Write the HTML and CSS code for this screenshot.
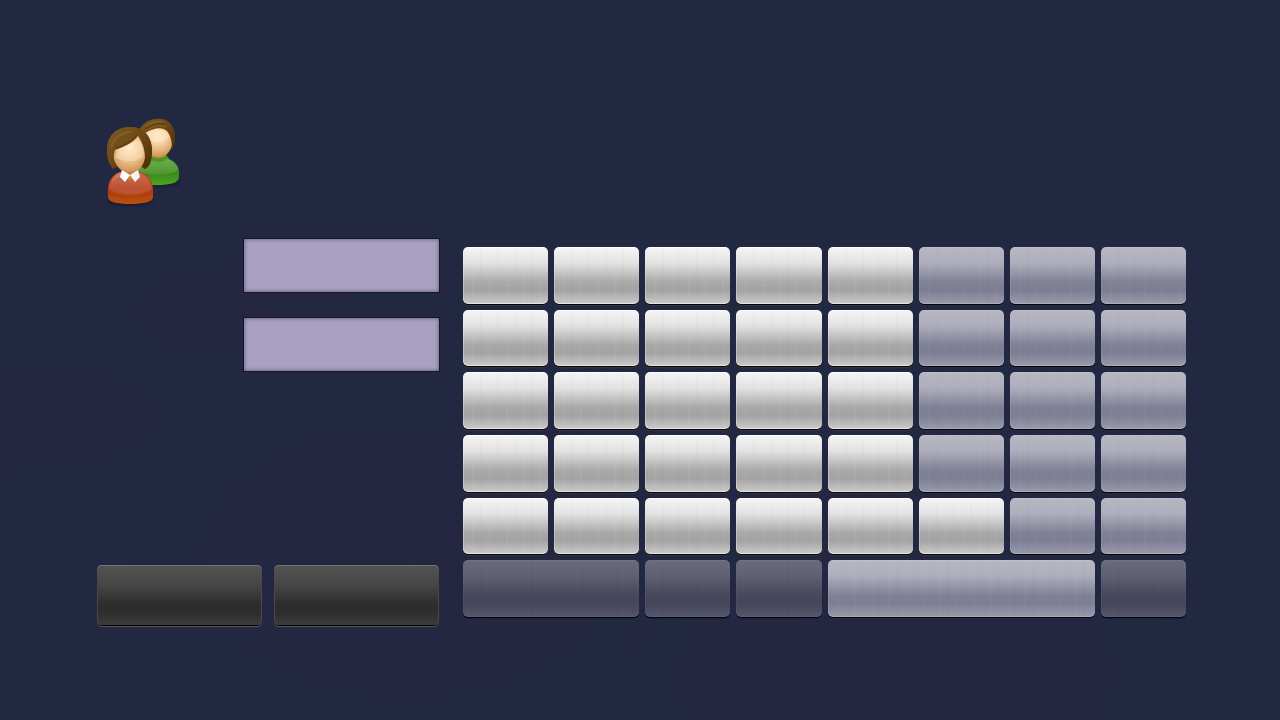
FILE: index.html
```html
<!DOCTYPE html>
<html lang="en">
<head>
<meta charset="utf-8">
<meta name="viewport" content="width=device-width, initial-scale=1">
<title>Keyboard</title>
<link rel="stylesheet" href="styles.css">
</head>
<body>
<main class="screen">
  <header class="header">
    <svg class="users" viewBox="0 0 78 92" aria-hidden="true">
      <defs>
        <radialGradient id="skin" cx=".5" cy=".3" r=".75"><stop offset="0" stop-color="#ffebc8"/><stop offset=".4" stop-color="#f2cd9c"/><stop offset=".8" stop-color="#d79f63"/><stop offset="1" stop-color="#b97f43"/></radialGradient>
        <linearGradient id="hair" x1="0" y1="0" x2="1" y2="1"><stop offset="0" stop-color="#7d5a26"/><stop offset=".5" stop-color="#6d4813"/><stop offset="1" stop-color="#4b2d05"/></linearGradient>
        <linearGradient id="red" x1="0" y1="0" x2="0" y2="1"><stop offset="0" stop-color="#c24a2a"/><stop offset=".55" stop-color="#b03a17"/><stop offset="1" stop-color="#b85208"/></linearGradient>
        <linearGradient id="green" x1="0" y1="0" x2="0" y2="1"><stop offset="0" stop-color="#4f9a25"/><stop offset=".6" stop-color="#3c8a1c"/><stop offset="1" stop-color="#4da61c"/></linearGradient>
        <linearGradient id="shine" x1="0" y1="0" x2="0" y2="1"><stop offset="0" stop-color="#fff" stop-opacity=".2"/><stop offset="1" stop-color="#fff" stop-opacity=".1"/></linearGradient>
        <filter id="soft" x="-20%" y="-50%" width="140%" height="200%"><feGaussianBlur stdDeviation="1.5"/></filter>
      </defs>
      <ellipse cx="54" cy="67" rx="22" ry="4" fill="#0b0e19" opacity=".45" filter="url(#soft)"/>
      <path d="M30 54C32 46 42 42 54 42C67 42 75 49 75 57V62C75 68 66 70 53 70C39 70 30 68 28 62Z" fill="url(#green)"/>
      <path d="M33 55C34 47 43 42 54 42C66 42 73 48 74 55C67 61 40 61 33 55Z" fill="url(#shine)"/>
      <path d="M43 43Q54 51 65 43L60 38H46Z" fill="#4f981f"/>
      <path d="M36 18C39 8 46 4 56 4C65 4 71 12 71 22C71 27 70 31 67 34L62 20L46 14Z" fill="url(#hair)"/>
      <path d="M38 20C40 12 47 12 53 13C60 12 67 16 69 24C69 34 62 43 55 43C46 43 38 34 38 20Z" fill="url(#skin)"/>
      <path d="M42 17Q54 10 66 20Q64 26 55 27Q45 27 40 23Z" fill="#ffebca" opacity=".5"/>
      <path d="M34 18C38 7 48 3 57 4C66 5 71 13 71 23C71 28 70 32 68 34C68 27 67 21 63 16C57 11 49 14 43 17L37 21Z" fill="url(#hair)"/>
      <path d="M42 11Q51 5 60 7M45 14Q54 8 63 12" fill="none" stroke="#98713b" stroke-width="1" opacity=".65"/>
      <path d="M41 14Q51 8 61 9" fill="none" stroke="#4c2e08" stroke-width="1" opacity=".6"/>
      <ellipse cx="26" cy="86" rx="23" ry="4" fill="#090c16" opacity=".5" filter="url(#soft)"/>
      <path d="M4 74C4 62 14 55 26 55C39 55 49 62 49 75V82C49 87 39 89 26 89C13 89 4 87 4 82Z" fill="url(#red)"/>
      <path d="M5 74C6 63 15 56 26 56C38 56 47 63 48 74C40 81 13 81 5 74Z" fill="url(#shine)"/>
      <path d="M7 68Q9 59 17 57V61Q11 63 7 68Z" fill="#fff" opacity=".15"/>
      <path d="M5 77Q9 82 26 82Q44 82 48 77" fill="none" stroke="#872705" opacity=".35"/>
      <path d="M3 35C3 20 13 12 26 12C39 12 48 21 48 35C48 46 46 52 41 54L36 51H14L9 54C5 49 3 44 3 35Z" fill="url(#hair)"/>
      <path d="M9 36C12 27 29 19 36 21C41 25 43 34 41 43C39 52 34 58 26 58C17 58 9 50 9 36Z" fill="url(#skin)"/>
      <path d="M14 35Q24 29 34 25Q41 33 39 42Q31 47 25 46Q16 46 11 42Z" fill="#ffecce" opacity=".4"/>
      <path d="M34 21C39 28 43 38 40 54C46 52 48 43 48 34C47 22 40 12 27 12C11 12 3 22 3 35C3 44 5 50 9 53C9 48 9 41 11 35C20 32 29 28 34 21Z" fill="url(#hair)"/>
      <path d="M7 33Q12 17 28 17" fill="none" stroke="#a07a45" stroke-width="2" opacity=".35"/>
      <path d="M11 33Q24 30 33 20" fill="none" stroke="#452707" stroke-width="1" opacity=".5"/>
      <path d="M20 57L26 60L33 57V61L26 65L19 61Z" fill="#c98628"/>
      <path d="M18 55L26 60L21 67L16 62Z" fill="#fff"/>
      <path d="M34 55L26 60L31 67L36 62Z" fill="#f4f4f3"/>
    </svg>
  </header>
  <div class="content">
    <form class="side">
      <div class="fields">
        <input class="field" type="text" aria-label="First field">
        <input class="field" type="text" aria-label="Second field">
      </div>
      <div class="actions">
        <button class="action" type="button" aria-label="Left action"></button>
        <button class="action" type="button" aria-label="Right action"></button>
      </div>
    </form>
    <section class="keys" aria-label="Keyboard">
      <button class="key" aria-label="Key 1"></button>
      <button class="key" aria-label="Key 2"></button>
      <button class="key" aria-label="Key 3"></button>
      <button class="key" aria-label="Key 4"></button>
      <button class="key" aria-label="Key 5"></button>
      <button class="key key-muted" aria-label="Key 6"></button>
      <button class="key key-muted" aria-label="Key 7"></button>
      <button class="key key-muted" aria-label="Key 8"></button>
      <button class="key" aria-label="Key 9"></button>
      <button class="key" aria-label="Key 10"></button>
      <button class="key" aria-label="Key 11"></button>
      <button class="key" aria-label="Key 12"></button>
      <button class="key" aria-label="Key 13"></button>
      <button class="key key-muted" aria-label="Key 14"></button>
      <button class="key key-muted" aria-label="Key 15"></button>
      <button class="key key-muted" aria-label="Key 16"></button>
      <button class="key" aria-label="Key 17"></button>
      <button class="key" aria-label="Key 18"></button>
      <button class="key" aria-label="Key 19"></button>
      <button class="key" aria-label="Key 20"></button>
      <button class="key" aria-label="Key 21"></button>
      <button class="key key-muted" aria-label="Key 22"></button>
      <button class="key key-muted" aria-label="Key 23"></button>
      <button class="key key-muted" aria-label="Key 24"></button>
      <button class="key" aria-label="Key 25"></button>
      <button class="key" aria-label="Key 26"></button>
      <button class="key" aria-label="Key 27"></button>
      <button class="key" aria-label="Key 28"></button>
      <button class="key" aria-label="Key 29"></button>
      <button class="key key-muted" aria-label="Key 30"></button>
      <button class="key key-muted" aria-label="Key 31"></button>
      <button class="key key-muted" aria-label="Key 32"></button>
      <button class="key" aria-label="Key 33"></button>
      <button class="key" aria-label="Key 34"></button>
      <button class="key" aria-label="Key 35"></button>
      <button class="key" aria-label="Key 36"></button>
      <button class="key" aria-label="Key 37"></button>
      <button class="key" aria-label="Key 38"></button>
      <button class="key key-muted" aria-label="Key 39"></button>
      <button class="key key-muted" aria-label="Key 40"></button>
      <button class="key key-dark key-double" aria-label="Key 41"></button>
      <button class="key key-dark" aria-label="Key 42"></button>
      <button class="key key-dark" aria-label="Key 43"></button>
      <button class="key key-muted key-triple" aria-label="Key 44"></button>
      <button class="key key-dark" aria-label="Key 45"></button>
    </section>
  </div>
</main>
</body>
</html>
```
FILE: styles.css
```css
* { box-sizing: border-box; }

body {
  margin: 0;
  min-height: 100vh;
  font-family: "Liberation Sans", sans-serif;
  background-color: #222842;
  background-image:
    radial-gradient(ellipse at 32% 78%, rgba(46, 32, 58, .25), transparent 24%),
    radial-gradient(ellipse at 19% 43%, rgba(46, 32, 58, .2), transparent 12%),
    radial-gradient(ellipse at 70% 94%, rgba(46, 32, 58, .25), transparent 24%),
    radial-gradient(ellipse at 0 58%, rgba(44, 34, 58, .25), transparent 14%);
}

.screen { padding: 115px 94px 48px 97px; }

.header { padding-left: 7px; }

.users {
  display: block;
  width: 78px;
  height: 92px;
}

.content {
  display: grid;
  grid-template-columns: 343fr 723fr;
  gap: 23px;
  margin-top: 31px;
}

.side {
  display: flex;
  flex-direction: column;
  justify-content: space-between;
}

.fields {
  display: grid;
  grid-template-columns: 146fr 197fr;
  row-gap: 24px;
}

.field {
  grid-column: 2;
  width: 100%;
  height: 55px;
  padding: 0 12px;
  border: 1px solid #141729;
  border-radius: 0;
  background: #a8a1c2;
  box-shadow: inset 0 0 4px #5c526c;
  font: 20px "Liberation Sans", sans-serif;
  outline: 0;
}

.actions {
  display: grid;
  grid-template-columns: 1fr 1fr;
  gap: 12px;
  padding-right: 1px;
}

.action {
  height: 60px;
  border: 0;
  border-radius: 5px;
  background: linear-gradient(#535353, #454545 35%, #2d2d2d 65%, #2e2e2e 80%, #3c3c3c);
  box-shadow: inset 0 1px #77757c, inset 1px 0 #484848, inset -1px 0 #484848, 0 1px #000, 0 2px #55545b;
}

.keys {
  display: grid;
  grid-template-columns: repeat(8, 1fr);
  grid-auto-rows: 1fr;
  gap: 6px;
  height: 370px;
  margin: 9px 0 8px;
}

.key {
  padding: 0;
  border: 0;
  border-radius: 5px;
  background:
    repeating-linear-gradient(90deg, rgba(0, 0, 0, .01) 0 2px, transparent 2px 9px, rgba(255, 255, 255, .03) 9px 11px, transparent 11px 17px),
    linear-gradient(#f5f5f5, #e2e2e2 28%, #a9a9a9 62%, #a3a3a3 76%, #cacaca);
  box-shadow: inset 0 1px #fff, inset 1px 0 rgba(255, 255, 255, .3), inset 0 -1px #e4e4e4, 0 1px #080808, 0 2px #32333e;
}

.key-muted {
  background:
    repeating-linear-gradient(90deg, rgba(0, 0, 0, .01) 0 2px, transparent 2px 9px, rgba(255, 255, 255, .02) 9px 11px, transparent 11px 17px),
    linear-gradient(#b8b8c4, #adadbc 28%, #808196 62%, #7d7e94 76%, #9a9aac);
  box-shadow: inset 0 1px #bebec8, inset 1px 0 rgba(255, 255, 255, .1), inset 0 -1px #acacb9, 0 1px #03040a, 0 2px #262b40;
}

.key-dark {
  background:
    repeating-linear-gradient(90deg, rgba(0, 0, 0, .02) 0 2px, transparent 2px 17px),
    linear-gradient(#6b6b7f, #606074 28%, #47475c 64%, #46475c 78%, #56566c);
  box-shadow: inset 0 1px #717184, inset 1px 0 rgba(255, 255, 255, .04), inset 0 -1px #5d5d72, 0 1px #03040a, 0 2px #1c2035;
}

.key-double { grid-column: span 2; }
.key-triple { grid-column: span 3; }
```
